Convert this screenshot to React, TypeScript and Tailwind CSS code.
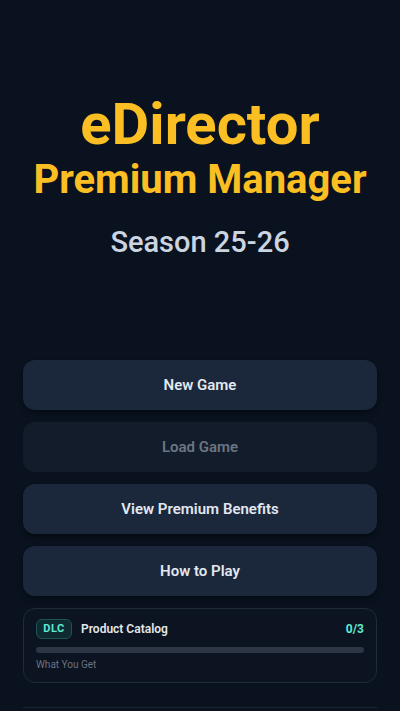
import React from "react";

const buttons = [
  { label: "New Game", disabled: false },
  { label: "Load Game", disabled: true },
  { label: "View Premium Benefits", disabled: false },
  { label: "How to Play", disabled: false },
];

export default function App() {
  return (
    <div
      className="flex h-[711px] w-full flex-col overflow-hidden bg-[#09121e] px-[23px]"
      style={{ fontFamily: "Roboto, 'Liberation Sans', sans-serif" }}
    >
      {/* Title */}
      <div className="flex flex-col items-center pt-[95px]">
        <h1 className="text-[58px] leading-none font-bold text-[#fbbf24]">eDirector</h1>
        <h2 className="mt-[7px] text-[40px] leading-10 font-bold text-[#fbbf24]">Premium Manager</h2>
        <p className="mt-[24px] text-[29px] leading-9 font-medium text-[#cbd5e1]">Season 25-26</p>
      </div>

      {/* Menu */}
      <div className="mt-[100px] flex flex-col gap-3">
        {buttons.map((b) => (
          <button
            key={b.label}
            disabled={b.disabled}
            className={
              b.disabled
                ? "h-[50px] rounded-xl bg-[#131c2b] text-[15px] font-semibold text-[#6b7585]"
                : "h-[50px] rounded-xl bg-[#1b273b] text-[15px] font-semibold text-[#e2e8f0] shadow-md shadow-black/30"
            }
          >
            {b.label}
          </button>
        ))}

        {/* DLC card */}
        <div className="rounded-xl border border-[#1f2b3b] bg-[#0b1420] px-3 pt-[10px] pb-[11px]">
          <div className="flex items-center">
            <span className="flex h-[20px] w-[36px] items-center justify-center rounded-md border border-[#1d5456] bg-[#0f2a30] text-[11px] font-bold tracking-wider text-[#5eead4]">
              DLC
            </span>
            <span className="ml-[9px] text-[12px] font-semibold text-[#e5e7eb]">Product Catalog</span>
            <span className="ml-auto text-[12px] font-bold text-[#5eead4]">0/3</span>
          </div>
          <div className="mt-[8px] h-[6px] w-full rounded-full bg-[#2c3645]" />
          <p className="mt-[6px] text-[10px] leading-3 text-[#6b7280]">What You Get</p>
        </div>
      </div>

      <div className="mt-[24px] border-t border-[#1a2331]" />
    </div>
  );
}
